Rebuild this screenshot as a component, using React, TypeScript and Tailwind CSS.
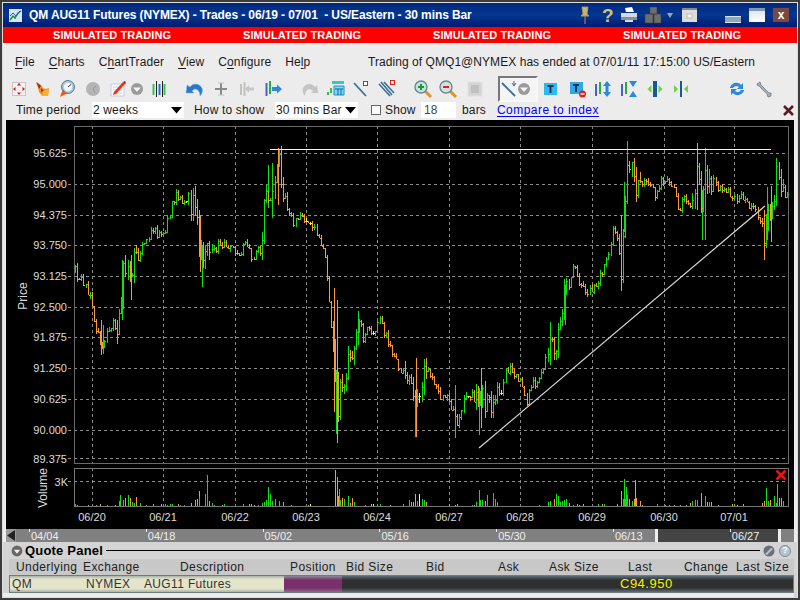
const curve: [number, number][] = [
  [74, 270], [83, 282], [90, 298], [93, 312], [97, 332], [102, 345], [107, 332], [113, 322], [117, 332], [120, 302],
  [123, 275], [130, 275], [135, 258], [138, 250], [147, 242], [152, 225], [158, 235], [162, 238], [167, 225], [170, 212],
  [175, 192], [182, 202], [188, 195], [193, 208], [198, 235], [202, 268], [207, 248], [213, 248], [223, 243], [233, 250],
  [240, 252], [247, 242], [253, 258], [260, 248], [263, 215], [268, 192], [272, 198], [278, 158], [283, 188], [287, 210],
  [293, 222], [303, 218], [313, 228], [320, 242], [325, 258], [328, 287], [332, 337], [335, 370], [337, 413], [340, 380],
  [347, 367], [352, 350], [358, 320], [363, 337], [368, 327], [373, 333], [380, 320], [387, 340], [392, 353], [400, 370],
  [407, 383], [415, 403], [420, 383], [427, 370], [433, 383], [442, 400], [448, 397], [455, 417], [458, 427], [463, 403],
  [472, 392], [478, 410], [482, 393], [485, 403], [490, 410], [495, 397], [502, 388], [505, 367], [512, 373], [520, 383],
  [527, 400], [532, 383], [538, 383], [545, 363], [550, 347], [557, 350], [563, 303], [565, 288], [573, 268], [578, 278],
  [585, 295], [593, 285], [600, 278], [605, 263], [612, 242], [613, 225], [618, 238], [621, 268], [624, 218], [627, 155],
  [632, 175], [637, 192], [645, 180], [655, 195], [663, 178], [673, 185], [678, 212], [683, 198], [690, 202], [697, 168],
  [702, 215], [705, 172], [713, 182], [723, 188], [733, 195], [742, 198], [750, 208], [758, 215], [763, 232], [768, 222],
  [772, 218], [777, 172], [782, 192], [787, 197],
];

const spikes: [number, number, number, "g" | "o"][] = [
  [278, 148, 205, "o"], [268, 165, 208, "g"], [272, 163, 218, "g"], [337, 300, 443, "o"], [334, 288, 412, "o"], [336, 370, 434, "g"],
  [627, 141, 192, "g"], [697, 143, 210, "o"], [705, 148, 240, "g"], [702, 190, 240, "g"], [764, 210, 260, "o"], [771, 186, 242, "o"],
  [767, 187, 240, "g"], [621, 215, 291, "o"], [624, 182, 232, "g"], [565, 285, 325, "g"], [479, 388, 435, "g"], [481, 368, 428, "o"],
  [415, 395, 437, "g"], [101, 320, 355, "o"], [103, 325, 354, "g"], [117, 320, 344, "o"], [122, 260, 320, "g"], [131, 255, 300, "o"],
  [200, 215, 272, "o"], [202, 245, 287, "g"], [358, 311, 345, "g"], [455, 385, 438, "g"], [416, 358, 437, "o"], [550, 322, 365, "g"],
];

const volumeSpikes: [number, number, "g" | "o"][] = [
  [207, 475, "g"], [268, 487, "g"], [335, 470, "o"], [337, 477, "o"], [339, 489, "g"], [479, 490, "g"], [493, 493, "g"], [624, 479, "g"],
  [635, 480, "o"], [621, 491, "o"], [626, 487, "g"], [777, 484, "g"], [766, 488, "g"], [120, 495, "g"], [199, 497, "g"],
];

function interp(x: number) {
  for (let i = 1; i < curve.length; i++) {
    if (x <= curve[i][0]) {
      const [x0, y0] = curve[i - 1];
      const [x1, y1] = curve[i];
      return y0 + ((y1 - y0) * (x - x0)) / (x1 - x0);
    }
  }
  return curve[curve.length - 1][1];
}

function buildChart() {
  let seed = 41;
  const rnd = () => {
    seed = (seed * 16807) % 2147483647;
    return seed / 2147483647;
  };
  const paths = { g: "", o: "", y: "" };
  const vols = { g: "", o: "", y: "" };
  let prev = interp(74);
  for (let i = 0; ; i++) {
    const x = 75 + i * 2.1;
    if (x > 787) break;
    const phase = ((x - 92) / 71.5 + 10) % 1;
    const active = phase > 0.36 && phase < 0.68;
    const amp = active ? 26 : 10;
    const close = interp(x) + (rnd() - 0.5) * amp;
    const open = prev;
    const diff = close - open;
    // only a few bars are flat enough to come out yellow
    const c = Math.abs(diff) < 0.2 ? "y" : diff < 0 ? "g" : "o";
    const top = Math.min(open, close) - rnd() * amp * 0.35;
    const bot = Math.max(open, close) + rnd() * amp * 0.35;
    const px = Math.round(x) + 0.5;
    paths[c] += `M${px} ${Math.round(top)}V${Math.round(bot)}M${px - 1} ${Math.round(open)}h1M${px} ${Math.round(close)}h1`;
    const vh = active ? (rnd() > 0.15 ? 3 + rnd() * 13 * Math.sin(((phase - 0.36) / 0.32) * Math.PI) : 0) : rnd() > 0.72 ? 1 + rnd() : 0;
    if (vh > 0.5) vols[c] += `M${px} 506V${Math.round(506 - vh)}`;
    prev = close;
  }
  for (const [x, t, b, c] of spikes) paths[c] += `M${x + 0.5} ${t}V${b}`;
  for (const [x, t, c] of volumeSpikes) vols[c] += `M${x + 0.5} 506V${t}`;
  return { paths, vols };
}

const chart = buildChart();
const priceTicks: [string, number][] = [
  ["95.625", 153], ["95.000", 184], ["94.375", 215], ["93.750", 245], ["93.125", 276], ["92.500", 307],
  ["91.875", 337], ["91.250", 368], ["90.625", 399], ["90.000", 430], ["89.375", 459],
];
const dateTicks: [string, number][] = [
  ["06/20", 92], ["06/21", 163], ["06/22", 235], ["06/23", 306], ["06/24", 377],
  ["06/27", 449], ["06/28", 520], ["06/29", 592], ["06/30", 664], ["07/01", 734],
];
const scrollTicks = ["04/04", "04/18", "05/02", "05/16", "05/30", "06/13", "06/27"];
const columns: [string, string][] = [
  ["Underlying", "w-[67px]"], ["Exchange", "w-[97px]"], ["Description", "w-[110px]"], ["Position", "w-[56px]"],
  ["Bid Size", "w-[80px]"], ["Bid", "w-[72px]"], ["Ask", "w-[51px]"], ["Ask Size", "w-[79px]"],
  ["Last", "w-[56px]"], ["Change", "w-[52px]"], ["Last Size", "w-[56px]"],
];

const PriceChart = () => (
  <svg viewBox="6 120 788 409" width="788" height="409" className="block" fontSize="11" fill="#dcdcdc">
    <g stroke="#8a8a8a" strokeDasharray="3 3" shapeRendering="crispEdges">
      {priceTicks.slice(0, 10).map(([l, y]) => (
        <path key={l} d={`M68 ${y + 0.5}H788`} />
      ))}
      <path d="M68 458.5H788" />
      <path d="M68 481.5H788" />
      {dateTicks.map(([l, x]) => (
        <g key={l}>
          <path d={`M${x + 0.5} 126V464`} />
          <path d={`M${x + 0.5} 468V510`} />
        </g>
      ))}
    </g>
    <g fill="none" stroke="#6a6a6a" shapeRendering="crispEdges">
      <path d="M74.5 126.5H788.5V463.5H74.5Z" />
      <path d="M74.5 468.5H788.5V506.5H74.5Z" stroke="#777" />
    </g>
    {priceTicks.map(([l, y]) => (
      <text key={l} x="67" y={y + 4} textAnchor="end">{l}</text>
    ))}
    <text x="68" y="486" textAnchor="end">3K</text>
    {dateTicks.map(([l, x]) => (
      <text key={l} x={x} y="521" textAnchor="middle">{l}</text>
    ))}
    <text transform="translate(27 296) rotate(-90)" textAnchor="middle" fontSize="12">Price</text>
    <text transform="translate(47 488) rotate(-90)" textAnchor="middle" fontSize="12">Volume</text>
    <g fill="none" shapeRendering="crispEdges">
      <path d={chart.vols.o} stroke="#ff9838" />
      <path d={chart.vols.g} stroke="#12e012" />
      <path d={chart.vols.y} stroke="#ffff30" />
      <path d={chart.paths.g} stroke="#12e012" />
      <path d={chart.paths.o} stroke="#ff9838" />
      <path d={chart.paths.y} stroke="#ffff30" />
    </g>
    <path d="M270 149.5H771" stroke="#f4f4f4" shapeRendering="crispEdges" />
    <path d="M479 448L765 206" stroke="#d8d8d8" strokeWidth="1.2" fill="none" />
    <path d="M776.5 470.5l9 9m0-9l-9 9" stroke="#f01010" strokeWidth="2.6" fill="none" />
  </svg>
);

const Ico = ({ children, className = "" }: { children: React.ReactNode; className?: string }) => (
  <svg viewBox="0 0 20 20" width="20" height="20" className={`shrink-0 ${className}`}>
    {children}
  </svg>
);

const DropCircle = ({ className = "" }: { className?: string }) => (
  <Ico className={className}>
    <circle cx="10" cy="10" r="6" fill="#9a9a9a" />
    <path d="M6 8.5h8L10 13Z" fill="#f4f4f4" />
  </Ico>
);

const Mono = ({ className = "", tone = "#555" }: { className?: string; tone?: string }) => (
  <svg viewBox="0 0 16 16" width="16" height="16" className={className}>
    <circle cx="8" cy="8" r="6" fill={tone} />
    <path d="M4.5 6.5h7L8 11Z" fill="#eee" />
  </svg>
);

const Menu = ({ pre, key2, post }: { pre: string; key2: string; post: string }) => (
  <span>
    {pre}
    <span className="underline underline-offset-2">{key2}</span>
    {post}
  </span>
);

const Arrow = ({ className = "" }: { className?: string }) => (
  <svg viewBox="0 0 11 7" width="11" height="7" className={`shrink-0 ${className}`}>
    <path d="M0 0h11L5.5 6.5Z" fill="#000" />
  </svg>
);

const App = () => {
  return (
    <div className="h-[600px] w-[800px] overflow-hidden border-2 border-[#3c3c3c] bg-[#ececec] font-['Liberation_Sans',Arial,sans-serif] text-[12px] text-[#1a1a1a]">
      <div className="flex h-full flex-col border border-[#dcdcdc]">
        {/* Title bar */}
        <div className="flex h-[24px] shrink-0 items-center bg-linear-to-b from-[#00287f] via-[#07378f] to-[#001a72] pl-[6px] text-white">
          <svg viewBox="0 0 13 13" width="13" height="13" className="shrink-0">
            <rect width="13" height="13" fill="#d8e4f4" />
            <path d="M1 11l3-4 2 2 3-5 3-2" stroke="#1a8a30" strokeWidth="1.4" fill="none" />
            <path d="M1 7l3-3 3 3 4-5" stroke="#2a5ac0" fill="none" />
          </svg>
          <span className="ml-[7px] text-[12px] font-bold tracking-[-0.1px] whitespace-pre">QM AUG11 Futures (NYMEX) - Trades - 06/19 - 07/01  - US/Eastern - 30 mins Bar</span>
          <div className="ml-auto flex items-center">
            <svg viewBox="0 0 14 18" width="14" height="18">
              <path d="M4 1h6l-1 7 2 2H3l2-2ZM7 10v8" fill="#c8b478" stroke="#a89458" />
            </svg>
            <span className="ml-[10px] w-[14px] text-[19px] leading-none font-bold text-[#d4c078]">?</span>
            <svg viewBox="0 0 18 16" width="18" height="16" className="ml-[4px]">
              <path d="M5 1l7-1 2 5H6Z" fill="#fff" />
              <path d="M1 6h16v7H13v2H5v-2H1Z" fill="#d4dce0" />
              <path d="M1 10h16v3H1Z" fill="#8a9098" />
            </svg>
            <svg viewBox="0 0 18 17" width="18" height="17" className="ml-[6px]">
              <path d="M6 0h7v7H6ZM1 7h8v9H1ZM10 7h7v9h-7Z" fill="#6e6e6e" stroke="#3e3e3e" strokeWidth="0.6" />
            </svg>
            <svg viewBox="0 0 6 5" width="6" height="5" className="ml-[5px]">
              <path d="M0 0h6L3 5Z" fill="#9aa4b8" />
            </svg>
            <svg viewBox="0 0 15 14" width="15" height="14" className="ml-[9px]">
              <rect width="15" height="14" fill="#dcdcdc" />
              <rect width="15" height="2" fill="#888" />
              <rect x="5" y="6" width="5" height="4" fill="#f4f4f4" stroke="#bbb" />
            </svg>
            <div className="mt-[8px] ml-[28px] h-[7px] w-[16px] border-y border-[#dde6ee] bg-[#8aa8c0]" />
            <div className="ml-[8px] h-[14px] w-[16px] border-t-[3px] border-[#8098b0] bg-linear-to-b from-[#dfe8ee] to-white" />
            <div className="mx-[8px] flex h-[14px] w-[16px] items-center justify-center bg-[#7a4a40] text-[12px] leading-none font-bold text-white">x</div>
          </div>
        </div>

        {/* Simulated banner */}
        <div className="flex h-[16px] shrink-0 items-center bg-[#ff0000] pl-[50px] text-[11px] font-bold tracking-[0.1px] text-white">
          {[0, 1, 2, 3].map((i) => (
            <span key={i} className="w-[190px] shrink-0">SIMULATED TRADING</span>
          ))}
        </div>

        {/* Menu */}
        <div className="flex h-[35px] shrink-0 items-center gap-[14px] pt-[3px] pl-[12px] tracking-[0.1px]">
          <Menu pre="" key2="F" post="ile" />
          <Menu pre="" key2="C" post="harts" />
          <Menu pre="C" key2="h" post="artTrader" />
          <Menu pre="" key2="V" post="iew" />
          <Menu pre="C" key2="o" post="nfigure" />
          <Menu pre="He" key2="l" post="p" />
          <span className="mr-[42px] ml-auto tracking-[0.05px]">Trading of QMQ1@NYMEX has ended at 07/01/11 17:15:00 US/Eastern</span>
        </div>

        {/* Toolbar */}
        <div className="flex h-[22px] shrink-0 items-center pl-[6px]">
          <Ico>
            <rect x="3.5" y="3.5" width="13" height="13" fill="#f2f2f2" stroke="#c8c8c8" />
            <path d="M10 4l2 2.5H8ZM10 16l2-2.5H8ZM4 10l2.5-2v4ZM16 10l-2.5-2v4Z" fill="#e01010" />
          </Ico>
          <Ico className="ml-[4px]">
            <path d="M4 3l4 3 2 3 3 1 3-1-1 8H9l-3-4Z" fill="#f09020" />
            <path d="M3 3l5 4-2 3ZM8 9l3 3-3 1Z" fill="#a03010" />
            <path d="M10 12l6-2-1 7H9Z" fill="#f8b030" />
          </Ico>
          <Ico className="ml-[4px]">
            <circle cx="11" cy="8" r="6.5" fill="#a8c8e0" stroke="#607890" />
            <circle cx="11" cy="8" r="4.2" fill="#f0f6fa" />
            <path d="M11 8l3-2.5" stroke="#333" />
            <path d="M3 18l3-8 2 3 3 1-4 2Z" fill="#e85818" />
          </Ico>
          <Ico className="ml-[6px]">
            <circle cx="10" cy="10" r="7" fill="#b4b4b4" />
            <path d="M10 10l3-3M10 10l2 4" stroke="#999" />
          </Ico>
          <Ico className="ml-[6px]">
            <path d="M2 5h13v12H2Z" fill="#fbfbff" stroke="#c8c8d8" />
            <path d="M4 8h9M4 11h9M4 14h9" stroke="#c8d0e8" />
            <path d="M4 16l1-3 9-10 2 2-9 10Z" fill="#e03818" />
            <path d="M14 3l2-1 1 2-1 1Z" fill="#703020" />
          </Ico>
          <DropCircle className="-ml-[2px]" />
          <Ico className="ml-[2px]">
            <path d="M4.5 5v11M15.5 5v11" stroke="#3cc060" strokeWidth="2" />
            <path d="M7.5 2v16M13.5 2v16" stroke="#222" />
            <path d="M10.5 5v11" stroke="#2a70e0" strokeWidth="2" />
          </Ico>
          <Ico className="ml-[16px]">
            <path d="M5 8c3-4 9-4 12 1 1 3 0 6-2 8 0-4-2-7-5-7-1 0-2 1-3 2l2 2H1l1-8Z" fill="#2a78c8" stroke="#7ab0e0" strokeWidth="0.5" />
          </Ico>
          <Ico className="ml-[6px]">
            <path d="M10 4v12M4 10h12" stroke="#8a8a8a" strokeWidth="2" />
            <path d="M7 4h6M7 16h6" stroke="#c4c4c4" />
          </Ico>
          <Ico className="ml-[6px]">
            <path d="M4 5v11M7.5 3v14" stroke="#c0c4c0" strokeWidth="2" />
            <path d="M17 8.5h-5V6l-4 4 4 4v-2.5h5Z" fill="#c4c8cc" />
          </Ico>
          <Ico className="ml-[6px]">
            <path d="M3.5 4v13" stroke="#4a60c8" strokeWidth="2" />
            <path d="M7 2v13" stroke="#20b040" strokeWidth="2" />
            <path d="M9 8h5V5.5l5 4.5-5 4.500V12H9Z" fill="#2a88e0" />
          </Ico>
          <Ico className="ml-[16px]">
            <path d="M16 8C13 4 7 4 4 9c-1 3 0 6 2 8 0-4 2-7 5-7 1 0 2 1 3 2l-2 2h7l-1-8Z" fill="#c4c4c4" />
          </Ico>
          <Ico className="ml-[7px]">
            <path d="M6 2h12v3H6Z" fill="#30c8c8" />
            <path d="M8 7h10v9H8Z" fill="#80d8e8" stroke="#2090c0" />
            <path d="M2 16v-3M5 14V9" stroke="#10b030" strokeWidth="1.6" />
            <path d="M9 10h8M12 10v6M15 10v6" stroke="#1060c0" />
          </Ico>
          <Ico className="ml-[5px]">
            <path d="M3 4l12 13" stroke="#3a7098" strokeWidth="1.8" />
            <rect x="12.500" y="2.500" width="4" height="4" fill="#fff" stroke="#e02010" />
          </Ico>
          <Ico className="ml-[6px]">
            <path d="M2 5l11 12M4 3l11 13M7 3l10 11" stroke="#3a7098" strokeWidth="1.6" />
            <rect x="13.500" y="1.500" width="4" height="4" fill="#fff" stroke="#e02010" />
          </Ico>
          <Ico className="ml-[16px]">
            <path d="M12 12l6 6" stroke="#e09030" strokeWidth="3" />
            <circle cx="8" cy="8" r="6" fill="#c8e0e0" stroke="#6a8a8a" strokeWidth="1.4" />
            <path d="M8 5v6M5 8h6" stroke="#10a030" strokeWidth="2" />
          </Ico>
          <Ico className="ml-[5px]">
            <path d="M12 12l6 6" stroke="#e09030" strokeWidth="3" />
            <circle cx="8" cy="8" r="6" fill="#d4e0e4" stroke="#6a8a8a" strokeWidth="1.4" />
            <path d="M5 8h6" stroke="#e02020" strokeWidth="2" />
          </Ico>
          <Ico className="ml-[7px]">
            <rect x="3" y="3" width="14" height="14" fill="#d4d4d4" stroke="#e2e2e2" />
            <rect x="6" y="6" width="8" height="8" fill="#c0c0c0" />
          </Ico>
          <div className="ml-[13px] flex h-[26px] w-[40px] shrink-0 items-center border-2 border-t-[#777] border-r-[#f8f8f8] border-b-[#f8f8f8] border-l-[#777] bg-[#f4f4f4]">
            <Ico className="-ml-[1px]">
              <path d="M3 4l13 13" stroke="#3a7098" strokeWidth="1.8" />
              <path d="M15 2v5M13 4l2 3 2-3" stroke="#3a7098" fill="none" />
            </Ico>
            <DropCircle className="-ml-[5px]" />
          </div>
          <Ico className="ml-[3px]">
            <rect x="3" y="4" width="13" height="12" fill="#30b8f0" />
            <path d="M6.500 7h6M9.500 7v7" stroke="#103050" strokeWidth="1.800" />
          </Ico>
          <Ico className="ml-[7px]">
            <rect x="2" y="3" width="13" height="12" fill="#30a8e8" />
            <path d="M5 6h6M8 6v7" stroke="#103050" strokeWidth="1.800" />
            <circle cx="14.500" cy="15" r="3.500" fill="#e02020" />
            <path d="M12.500 15h4" stroke="#fff" strokeWidth="1.400" />
          </Ico>
          <Ico className="ml-[5px]">
            <path d="M3 5v12" stroke="#4a60c8" strokeWidth="2" />
            <path d="M7 3v12" stroke="#20b040" strokeWidth="2" />
            <path d="M14 2l4 5h-2.500v6H18l-4 5-4-5h2.500V7H10Z" fill="#2a88e0" />
          </Ico>
          <Ico className="ml-[6px]">
            <path d="M3 5v12" stroke="#4a60c8" strokeWidth="2" />
            <path d="M7 3v12" stroke="#20b040" strokeWidth="2" />
            <path d="M10 2h8l-4 6ZM10 18h8l-4-6Z" fill="#2a88e0" />
          </Ico>
          <Ico className="ml-[6px]">
            <rect x="8" y="2" width="4" height="16" fill="#155a90" />
            <path d="M6.500 6v8L2.500 10ZM13.500 6v8l4-4Z" fill="#70d050" />
          </Ico>
          <Ico className="ml-[6px]">
            <rect x="9" y="2" width="2" height="16" fill="#155a90" />
            <path d="M3 6v8l4-4ZM17 6v8l-4-4Z" fill="#70d050" />
          </Ico>
          <Ico className="ml-[36px]">
            <path d="M3 9c1-5 8-7 11-3l2-2v6h-6l2-2c-2-2-5-1-6 1Z" fill="#2a88e0" />
            <path d="M17 11c-1 5-8 7-11 3l-2 2v-6h6l-2 2c2 2 5 1 6-1Z" fill="#2a88e0" />
          </Ico>
          <Ico className="ml-[6px]">
            <path d="M4 5l3-2 1 3 8 8 2 0 0 3-3 1-1-3-8-8-2-1Z" fill="#a8b0b8" stroke="#707880" strokeWidth="0.8" />
          </Ico>
        </div>

        {/* Options row */}
        <div className="flex h-[20px] shrink-0 items-center pl-[13px] tracking-[0.15px]">
          <span className="w-[76px] shrink-0">Time period</span>
          <div className="flex h-[16px] w-[92px] shrink-0 items-center justify-between bg-white pr-[2px] pl-[1px]">
            <span>2 weeks</span>
            <Arrow />
          </div>
          <span className="ml-[10px] w-[81px] shrink-0">How to show</span>
          <div className="flex h-[16px] w-[83px] shrink-0 items-center justify-between bg-white pr-[2px] pl-[1px] whitespace-nowrap">
            <span>30 mins Bar</span>
            <Arrow />
          </div>
          <div className="ml-[13px] h-[10px] w-[10px] shrink-0 border border-[#666] bg-white" />
          <span className="ml-[4px] w-[36px] shrink-0">Show</span>
          <div className="flex h-[16px] w-[35px] shrink-0 items-center bg-white pl-[3px] text-[#444]">18</div>
          <span className="ml-[6px] w-[35px] shrink-0">bars</span>
          <span className="tracking-[0.45px] text-[#0000ff] underline underline-offset-2">Compare to index</span>
          <svg viewBox="0 0 11 11" width="11" height="11" className="mr-[3px] ml-auto">
            <path d="M1 1l9 9M10 1l-9 9" stroke="#5a1c1c" strokeWidth="2.600" />
          </svg>
        </div>

        {/* Chart */}
        <div className="mx-[3px] h-[409px] w-[788px] shrink-0 bg-black">
          <PriceChart />
        </div>

        {/* Range scrollbar */}
        <div className="mx-[3px] flex h-[13px] w-[788px] shrink-0 bg-[#808080]">
          <div className="flex w-[10px] shrink-0 items-center justify-center bg-[#9a9a9a]">
            <svg viewBox="0 0 8 11" width="8" height="11">
              <path d="M8 0v11L0 5.500Z" fill="#222" />
            </svg>
          </div>
          <div className="relative flex flex-1 pl-[13px]">
            {scrollTicks.map((t) => (
              <div key={t} className="relative z-10 w-[116.800px] shrink-0">
                <div className="h-[3px] w-px bg-[#eee]" />
                <div className="-mt-[2px] ml-[2px] text-[11px] leading-[12px] text-[#eee]">{t}</div>
              </div>
            ))}
            <div className="absolute top-0 bottom-0 left-[639px] w-[126px] border-x-[3px] border-[#eee] bg-[#444]" />
          </div>
          <div className="flex w-[13px] shrink-0 items-center justify-center bg-[#b4b4b4]">
            <svg viewBox="0 0 9 11" width="9" height="11">
              <path d="M0 0v11L9 5.500Z" fill="#444" />
            </svg>
          </div>
        </div>

        {/* Quote panel */}
        <div className="flex min-h-0 flex-1 flex-col bg-[#d4d4d4] pr-[3px]">
          <div className="flex h-[17px] shrink-0 items-center pl-[6px]">
            <Mono tone="#666" className="shrink-0 scale-90" />
            <span className="text-[13px] font-bold tracking-[0.2px] whitespace-nowrap text-black">Quote Panel</span>
            <div className="mx-[3px] h-[1px] flex-1 bg-black" />
            <svg viewBox="0 0 12 12" width="12" height="12" className="shrink-0">
              <circle cx="6" cy="6" r="5.500" fill="#6a7078" />
              <path d="M2 9l6-6 2 1-6 6Z" fill="#b8c0c8" />
            </svg>
            <div className="mr-[3px] ml-[4px] flex h-[12px] w-[12px] shrink-0 items-center justify-center rounded-full border border-[#808890] bg-[#b8c4d0] text-[9px] leading-none font-bold text-white">?</div>
          </div>
          <div className="ml-[6px] flex h-[16px] shrink-0 items-center bg-[#c8c8c8] pl-[7px] tracking-[0.4px] whitespace-nowrap text-[#222]">
            {columns.map(([name, w]) => (
              <span key={name} className={`shrink-0 ${w}`}>{name}</span>
            ))}
          </div>
          <div className="ml-[6px] flex h-[18px] shrink-0 border border-[#6c7c80] whitespace-nowrap">
            <div className="flex w-[274px] shrink-0 items-center bg-[linear-gradient(#a9b3ab,#e4e4ca_20%,#e4e4ca_80%,#a9b3ab)] pl-[2px] tracking-[0.35px] text-[#333]">
              <span className="w-[74px]">QM</span>
              <span className="w-[58px]">NYMEX</span>
              <span>AUG11 Futures</span>
            </div>
            <div className="w-[58px] shrink-0 bg-[linear-gradient(#8a8a94,#7a2f6c_25%,#7a2f6c_75%,#8a6a88)]" />
            <div className="flex flex-1 items-center bg-[linear-gradient(#5c6e78,#303030_25%,#303030_75%,#5c6e78)] pl-[278px] text-[13px] tracking-[0.5px] text-[#f4f400]">
              C94.950
            </div>
          </div>
          <div className="flex-1 bg-[#ececec]" />
        </div>
      </div>
    </div>
  );
};

export default App;
